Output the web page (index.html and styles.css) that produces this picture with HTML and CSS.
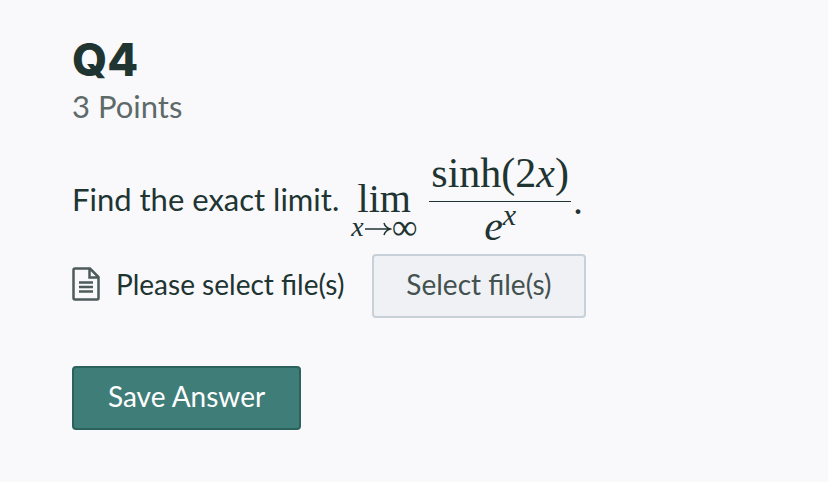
FILE: index.html
```
<!DOCTYPE html>
<html lang="en">
<head>
<meta charset="utf-8">
<meta name="viewport" content="width=device-width, initial-scale=1">
<title>Q4</title>
<link rel="stylesheet" href="styles.css">
</head>
<body>
<main class="question">
  <header class="heading">
    <h1 class="title">Q4</h1>
    <p class="points">3 Points</p>
  </header>
  <form class="answer">
    <div class="prompt">
      <span class="sentence">Find the exact limit.</span>
      <span class="limit"><span class="operator">lim</span><span class="bound"><i>x</i><svg class="arrow" viewBox="0 0 28 16" aria-hidden="true"><path d="M1 8H26M20 2C21 5.500 23 7 26.500 8C23 9 21 10.500 20 14"/></svg><span class="infinity">∞</span></span></span>
      <span class="fraction"><span class="numerator">sinh(2<i>x</i>)</span><span class="denominator"><i>e</i><sup><i>x</i></sup></span></span>
      <span class="period">.</span>
    </div>
    <div class="upload">
      <svg class="file-icon" viewBox="0 0 28 34" aria-hidden="true"><path d="M3 1.500H18L26.500 10V31Q26.500 32.500 25 32.500H3Q1.500 32.500 1.500 31V3Q1.500 1.500 3 1.500ZM17.500 1.500V10.500H26.500M7 15.500H21M7 20H21M7 24.500H21"/></svg>
      <span class="upload-text" id="upload-text">Please select file(s)</span>
      <button class="button" type="button" aria-describedby="upload-text">Select file(s)</button>
    </div>
    <button class="button primary" type="submit">Save Answer</button>
  </form>
</main>
</body>
</html>
```
FILE: styles.css
```
* { box-sizing: border-box; }
body {
  margin: 0;
  background: #f9f9fb;
  color: #203432;
  font-family: Lato, "Liberation Sans", sans-serif;
  font-size: 28px;
}
.question { padding: 36px 72px 52px; }
.title {
  margin: 0;
  font-family: Inter, sans-serif;
  font-size: 45px;
  font-weight: 800;
  line-height: 48px;
}
.points {
  margin: 0;
  color: #5d6a69;
  font-size: 31px;
  line-height: 44px;
}
.prompt {
  display: flex;
  align-items: center;
  margin-top: 20px;
  height: 106px;
  white-space: nowrap;
}
.sentence { font-size: 31px; line-height: 36px; padding-bottom: 4px; }
.limit, .fraction, .period {
  font-family: "Liberation Serif", serif;
  font-size: 40px;
}
.limit {
  display: flex;
  flex-direction: column;
  align-items: center;
  margin-left: 12px;
  padding-top: 16px;
}
.operator { line-height: 36px; }
.bound {
  display: flex;
  align-items: center;
  font-size: 28px;
  line-height: 20px;
}
.arrow {
  width: 28px;
  height: 16px;
  margin-top: 4px;
  fill: none;
  stroke: currentColor;
  stroke-width: 1.500;
}
.infinity { font-size: 36px; }
.fraction {
  display: flex;
  flex-direction: column;
  text-align: center;
  margin-left: 12px;
  font-size: 42px;
}
.numerator {
  padding: 0 2px 4px;
  border-bottom: 1px solid;
  line-height: 48px;
}
.denominator { line-height: 48px; padding-bottom: 4px; }
.denominator sup { font-size: 30px; line-height: 0; }
.period { line-height: 40px; margin-left: 2px; }
.upload { display: flex; align-items: center; }
.file-icon {
  width: 28px;
  height: 34px;
  margin: 0 16px 4px 0;
  fill: none;
  stroke: #4d5b5a;
  stroke-width: 2.500;
}
.upload-text { margin-right: 28px; padding-bottom: 4px; }
.button {
  min-height: 64px;
  padding: 0 32px 4px;
  border: 2px solid #c8d0d8;
  border-radius: 4px;
  background: #f0f1f5;
  color: #435150;
  font: inherit;
}
.primary {
  margin-top: 48px;
  padding: 0 34px 4px;
  border-color: #2b625c;
  background: #3f7d78;
  color: #fff;
}
```
